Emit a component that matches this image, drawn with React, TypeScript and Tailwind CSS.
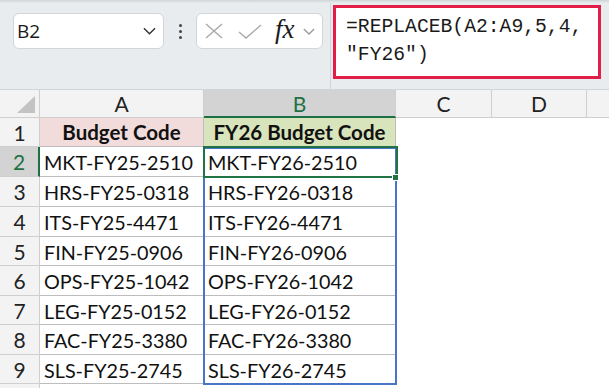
import React from "react";

const codes = [
  "MKT-FY25-2510",
  "HRS-FY25-0318",
  "ITS-FY25-4471",
  "FIN-FY25-0906",
  "OPS-FY25-1042",
  "LEG-FY25-0152",
  "FAC-FY25-3380",
  "SLS-FY25-2745",
];

// row heights (incl. bottom grid line) for rows 1..9
const heights = ["h-[29px]", "h-[30px]", "h-[30px]", "h-[30px]", "h-[29px]", "h-[30px]", "h-[29px]", "h-[30px]", "h-[29px]"];

function Chevron({ className }: { className?: string }) {
  return (
    <svg viewBox="0 0 14 8" className={className} fill="none" stroke="currentColor" strokeWidth="1.5">
      <path d="M1 1l6 6 6-6" />
    </svg>
  );
}

export default function App() {
  return (
    <div className="w-[609px] h-[388px] overflow-hidden bg-white font-['Lato',sans-serif] text-[#111]">
      {/* formula toolbar */}
      <div className="h-[90px] bg-[#e9ecef] border-b border-[#d2d5d8] flex relative">
        <div className="absolute top-0 left-0 right-0 h-[3px] bg-gradient-to-b from-[#cfd3d6] to-[#e9ecef]" />
        <div className="flex items-start pt-[13px] pl-[13px]">
          <div className="w-[151px] h-[36px] bg-white border border-[#d3d6d9] rounded-[6px] flex items-center pl-[3px] pr-[7px]">
            <span className="font-['Open_Sans',sans-serif] text-[19px] text-[#1a1a1a] flex-1">B2</span>
            <Chevron className="w-[13px] h-[8px] text-[#333]" />
          </div>
          <div className="w-[32px] h-[36px] flex flex-col items-center justify-center gap-[3px]">
            <span className="w-[3px] h-[3px] bg-[#444] rounded-full" />
            <span className="w-[3px] h-[3px] bg-[#444] rounded-full" />
            <span className="w-[3px] h-[3px] bg-[#444] rounded-full" />
          </div>
          <div className="w-[127px] h-[36px] bg-white border border-[#d3d6d9] rounded-[6px] flex items-center pl-[8px]">
            <svg viewBox="0 0 18 16" className="w-[18px] h-[16px] text-[#a8a8a8]" fill="none" stroke="currentColor" strokeWidth="1.4">
              <path d="M1 1l16 14M17 1L1 15" />
            </svg>
            <svg viewBox="0 0 24 15" className="w-[24px] h-[15px] ml-[15px] text-[#a8a8a8]" fill="none" stroke="currentColor" strokeWidth="1.4">
              <path d="M1 8l7 6L23 1" />
            </svg>
            <span className="ml-[13px] font-['Liberation_Serif',serif] italic text-[27px] leading-none text-[#1a1a1a] -mt-[3px]">fx</span>
            <Chevron className="ml-[8px] w-[12px] h-[7px] text-[#9a9a9a]" />
          </div>
        </div>
        <div className="ml-[7px] w-px h-full bg-[#d2d5d8]" />
        <div className="ml-[2px] mt-[5px] w-[268px] h-[74px] bg-white border-[3px] border-[#e11d48] pl-[10px] pt-[5px] font-['Liberation_Mono',monospace] text-[19.7px] leading-[28px] text-[#1a1a1a]">
          <div>=REPLACEB(A2:A9,5,4,</div>
          <div>"FY26")</div>
        </div>
      </div>

      {/* grid */}
      <div className="relative">
        {/* column headers */}
        <div className="flex h-[28px] bg-[#f3f3f3] border-b border-[#cfcfcf] text-[#222] text-[21px] leading-[27px]">
          <div className="w-[40px] border-r border-[#cfcfcf] relative">
            <svg viewBox="0 0 18 17" className="absolute left-[17px] top-[6px] w-[18px] h-[17px]">
              <path d="M18 0V17H0Z" fill="#c3c3c3" />
            </svg>
          </div>
          <div className="w-[164px] border-r border-[#cfcfcf] text-center">A</div>
          <div className="w-[192px] border-r border-[#cfcfcf] bg-[#d3d3d3] text-center text-[#1e7145] border-b-2 border-b-[#1e7145] -mb-px">B</div>
          <div className="w-[96px] border-r border-[#cfcfcf] text-center">C</div>
          <div className="w-[95px] border-r border-[#cfcfcf] text-center">D</div>
          <div className="flex-1" />
        </div>

        {/* row 1 */}
        <div className={"flex " + heights[0]}>
          <div className="w-[40px] bg-[#f3f3f3] border-r border-b border-[#cfcfcf] text-center text-[21px] leading-[29px] text-[#222]">1</div>
          <div className="w-[164px] bg-[#f2dcdb] border-r border-b border-[#bdbdbd] text-center font-bold leading-[29px] text-[20.5px] whitespace-nowrap">Budget Code</div>
          <div className="w-[192px] bg-[#d8e4bc] border-r border-b border-[#bdbdbd] text-center font-bold leading-[29px] text-[20.5px] whitespace-nowrap">FY26 Budget Code</div>
          <div className="flex-1" />
        </div>

        {codes.map((code, i) => {
          const active = i === 0;
          return (
            <div key={code} className={"flex " + heights[i + 1]}>
              <div
                className={
                  "w-[40px] border-b border-[#cfcfcf] text-center text-[21px] leading-[30px] " +
                  (active ? "bg-[#d3d3d3] text-[#1e7145] border-r-2 border-r-[#1e7145]" : "bg-[#f3f3f3] text-[#222] border-r")
                }
              >
                {i + 2}
              </div>
              <div className="w-[164px] border-r border-b border-[#bdbdbd] pl-[4px] pt-[2px] leading-[27px] text-[19.8px] whitespace-nowrap overflow-hidden">{code}</div>
              <div className="w-[192px] border-r border-b border-[#bdbdbd] pl-[4px] pt-[2px] leading-[27px] text-[19.8px] whitespace-nowrap overflow-hidden">{code.replace("FY25", "FY26")}</div>
              <div className="flex-1" />
            </div>
          );
        })}

        {/* row 10 (cut off) */}
        <div className="flex h-[10px]">
          <div className="w-[40px] bg-[#f3f3f3] border-r border-[#cfcfcf]" />
        </div>

        {/* spill range outline B2:B9 */}
        <div className="absolute left-[203px] top-[57px] w-[194px] h-[238px] border-2 border-[#4a75c5] pointer-events-none" />
        {/* active cell B2 */}
        <div className="absolute left-[203px] top-[56px] w-[195px] h-[32px] border-2 border-[#217346]" />
        <div className="absolute left-[392px] top-[84px] w-[7px] h-[7px] bg-[#217346] border border-white" />
      </div>
    </div>
  );
}
